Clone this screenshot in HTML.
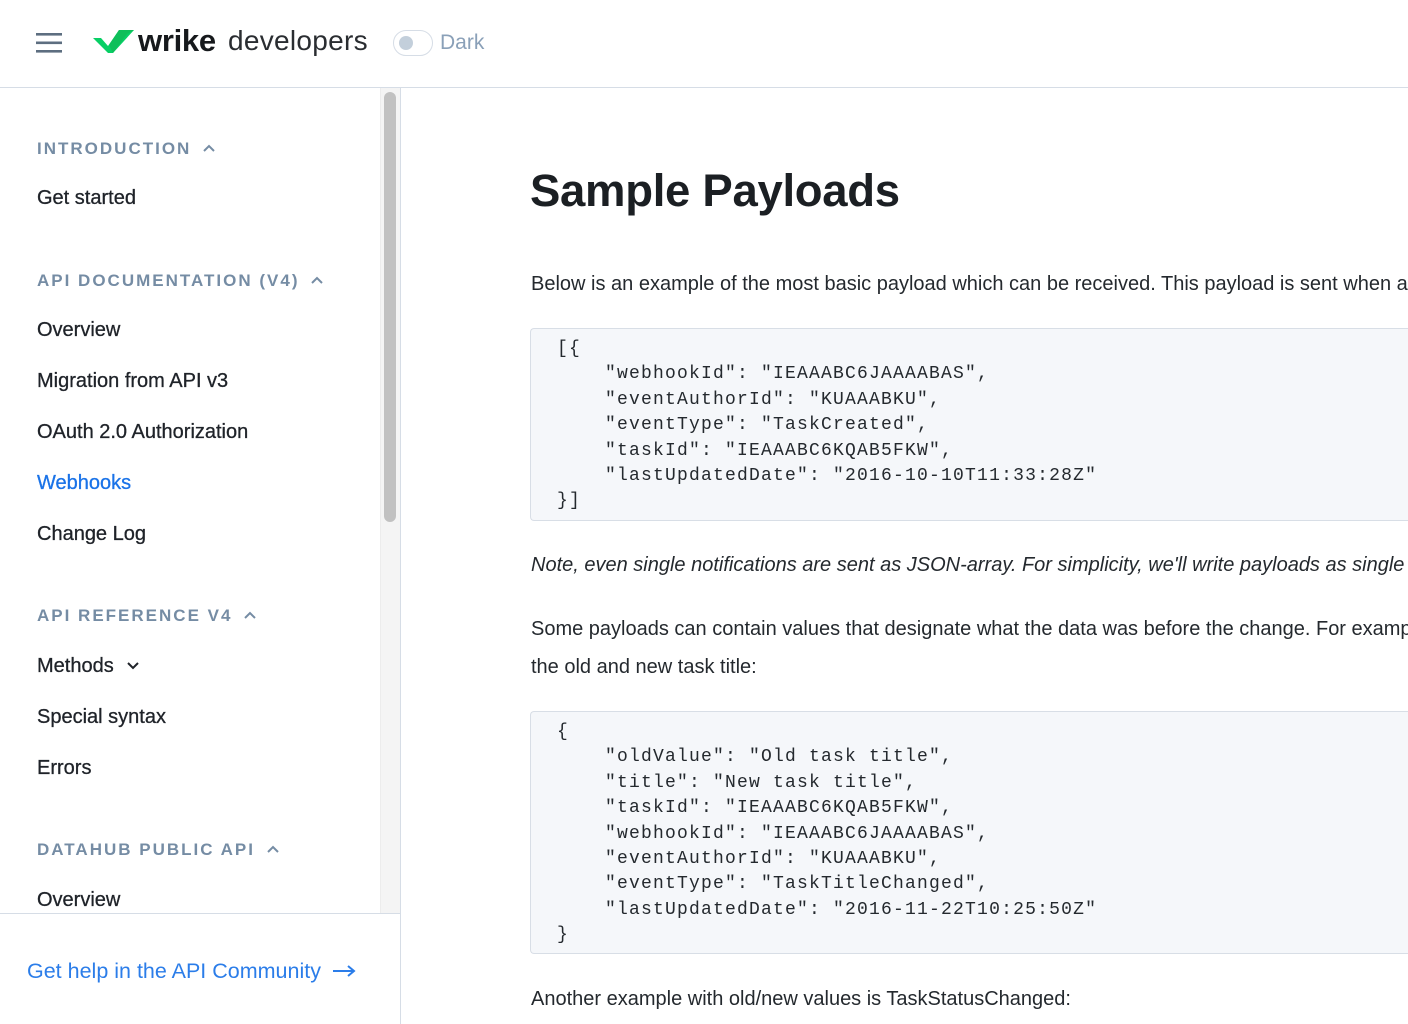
<!DOCTYPE html>
<html><head><meta charset="utf-8"><style>
*{margin:0;padding:0;box-sizing:border-box}
html,body{width:1408px;height:1024px;overflow:hidden}
body{background:#fff;font-family:"Liberation Sans",sans-serif;color:#1f2329}
#w{position:relative;width:1408px;height:1024px;overflow:hidden}
.hdr{position:absolute;left:0;top:0;width:1408px;height:88px;border-bottom:1px solid #d6dde6;background:#fff}
.abs{position:absolute;white-space:nowrap}
.side{position:absolute;left:0;top:88px;width:401px;height:936px;border-right:1px solid #d6dde6}
.track{position:absolute;left:380px;top:88px;width:20px;height:825px;background:#f4f4f4;border-left:1px solid #ececec}
.thumb{position:absolute;left:384px;top:92px;width:12px;height:430px;background:#c1c1c1;border-radius:6px}
.sec{position:absolute;left:37px;font-size:17px;letter-spacing:2px;color:#67809b;font-weight:bold;opacity:.9;white-space:nowrap}
.sec svg{margin-left:12px;vertical-align:2px}
.it{position:absolute;left:37px;font-size:20px;color:#1f2329;white-space:nowrap;-webkit-text-stroke:0.3px #1f2329}
.foot{position:absolute;left:0;top:913px;width:400px;height:1px;background:#d6dde6}
.code{position:absolute;left:530px;width:878px;background:#f5f7fa;border:1px solid #d8dee6;border-right:none;border-radius:4px 0 0 4px;font-family:"Liberation Mono",monospace;font-size:18px;letter-spacing:1.2px;line-height:25.4px;color:#24292e;white-space:pre;padding-left:26px;overflow:hidden}
.p{position:absolute;left:531px;width:877px;overflow:hidden;font-size:20px;color:#24292e;white-space:nowrap}
</style></head><body><div id="w">
<div class="hdr">
 <svg class="abs" style="left:36px;top:33px" width="26" height="20"><rect y="0" width="26" height="2.6" fill="#5d6e80"/><rect y="8.5" width="26" height="2.6" fill="#5d6e80"/><rect y="17" width="26" height="2.6" fill="#5d6e80"/></svg>
 <svg class="abs" style="left:93px;top:29px" width="42" height="26"><polygon points="0,9 8,9 15,17 26,1 41,1 20,24 15,24" fill="#08cf65"/><polygon points="20,24 34,5 41,1 26,1 16,16" fill="#0fbf5a"/></svg>
 <div class="abs" style="left:138px;top:23px;font-size:31px;font-weight:bold;color:#16191c;letter-spacing:-0.3px">wrike</div>
 <div class="abs" style="left:228px;top:25px;font-size:28px;color:#2a2d31;letter-spacing:0.3px">developers</div>
 <div class="abs" style="left:393px;top:30px;width:40px;height:26px;border:1px solid #d6dde6;border-radius:13px"></div>
 <div class="abs" style="left:399px;top:36px;width:14px;height:14px;border-radius:7px;background:#c3cfdb"></div>
 <div class="abs" style="left:440px;top:31px;font-size:21px;color:#8aa0b8">Dark</div>
</div>
<div class="side"></div>
<div class="track"></div><div class="thumb"></div>
<div class="sec" style="top:139px">INTRODUCTION<svg width="12" height="8"><path d="M1 7L6 2L11 7" stroke="#67809b" stroke-width="2" fill="none"/></svg></div>
<div class="it" style="top:187px">Get started</div>
<div class="sec" style="top:271px">API DOCUMENTATION (V4)<svg width="12" height="8"><path d="M1 7L6 2L11 7" stroke="#67809b" stroke-width="2" fill="none"/></svg></div>
<div class="it" style="top:319px">Overview</div>
<div class="it" style="top:370px">Migration from API v3</div>
<div class="it" style="top:421px">OAuth 2.0 Authorization</div>
<div class="it" style="top:472px;color:#1a73e8;-webkit-text-stroke:0.3px #1a73e8">Webhooks</div>
<div class="it" style="top:523px">Change Log</div>
<div class="sec" style="top:606px">API REFERENCE V4<svg width="12" height="8"><path d="M1 7L6 2L11 7" stroke="#67809b" stroke-width="2" fill="none"/></svg></div>
<div class="it" style="top:655px">Methods <svg width="12" height="8" style="margin-left:8px;vertical-align:2px"><path d="M1 1L6 6L11 1" stroke="#1f2329" stroke-width="2" fill="none"/></svg></div>
<div class="it" style="top:706px">Special syntax</div>
<div class="it" style="top:757px">Errors</div>
<div class="sec" style="top:840px">DATAHUB PUBLIC API<svg width="12" height="8"><path d="M1 7L6 2L11 7" stroke="#67809b" stroke-width="2" fill="none"/></svg></div>
<div class="it" style="top:889px">Overview</div>
<div class="foot"></div>
<div class="abs" style="left:27px;top:959px;font-size:21.5px;color:#2b7de9">Get help in the API Community <svg width="24" height="12" style="margin-left:6px;vertical-align:1px"><path d="M0 6H21M15 1L21 6L15 11" stroke="#2b7de9" stroke-width="2" fill="none"/></svg></div>

<div class="abs" style="left:530px;top:165px;font-size:45.5px;font-weight:bold;color:#1b1f23;letter-spacing:-0.3px">Sample Payloads</div>
<div class="p" style="top:273px">Below is an example of the most basic payload which can be received. This payload is sent when a task is created</div>
<div class="code" style="top:328px;height:193px;padding-top:8px">[{
    "webhookId": "IEAAABC6JAAAABAS",
    "eventAuthorId": "KUAAABKU",
    "eventType": "TaskCreated",
    "taskId": "IEAAABC6KQAB5FKW",
    "lastUpdatedDate": "2016-10-10T11:33:28Z"
}]</div>
<div class="p" style="top:554px;font-style:italic">Note, even single notifications are sent as JSON-array. For simplicity, we'll write payloads as single objects</div>
<div class="p" style="top:618px">Some payloads can contain values that designate what the data was before the change. For example, this contains</div>
<div class="p" style="top:656px">the old and new task title:</div>
<div class="code" style="top:711px;height:243px;padding-top:8px">{
    "oldValue": "Old task title",
    "title": "New task title",
    "taskId": "IEAAABC6KQAB5FKW",
    "webhookId": "IEAAABC6JAAAABAS",
    "eventAuthorId": "KUAAABKU",
    "eventType": "TaskTitleChanged",
    "lastUpdatedDate": "2016-11-22T10:25:50Z"
}</div>
<div class="p" style="top:988px">Another example with old/new values is TaskStatusChanged:</div>
</div></body></html>
